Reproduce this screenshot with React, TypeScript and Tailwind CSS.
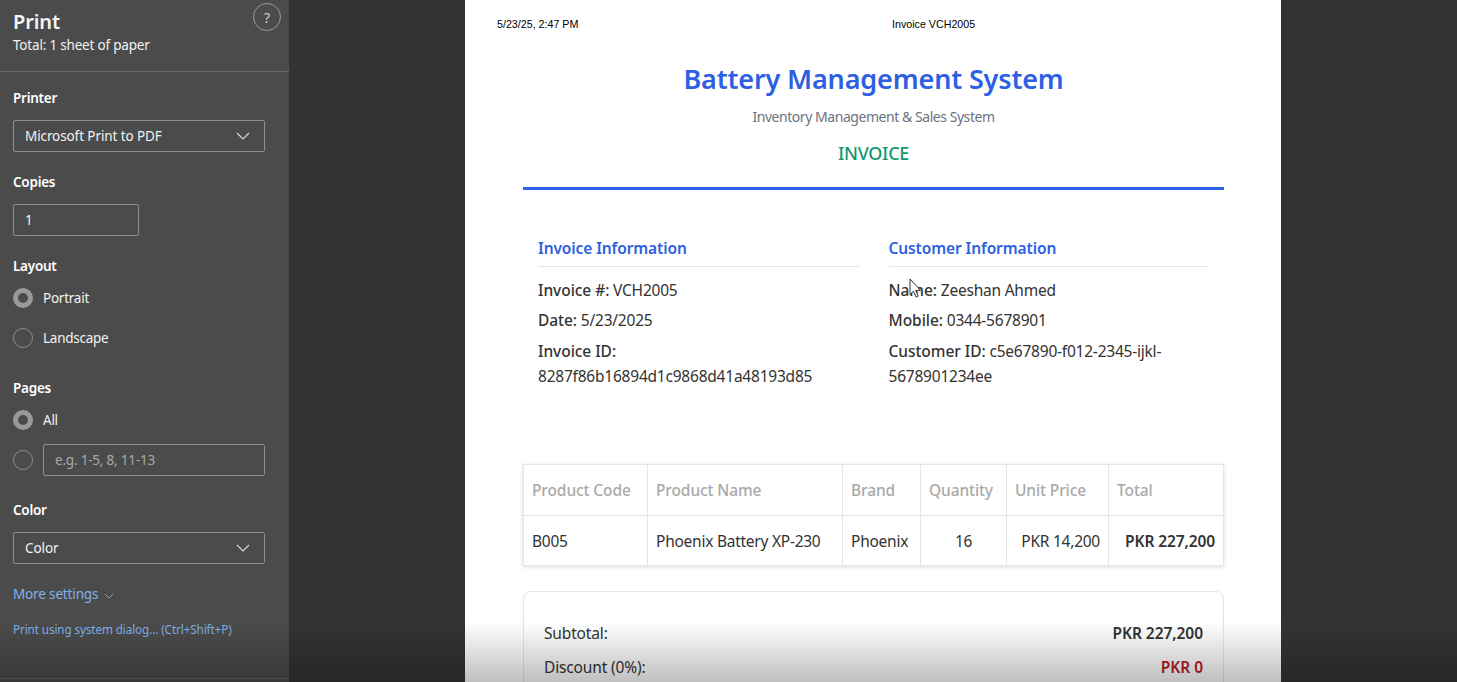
const font = "font-['Noto_Sans','Open_Sans',sans-serif]";

function Chevron() {
  return (
    <svg width="14" height="8" viewBox="0 0 14 8" fill="none" stroke="#d8d8d8" strokeWidth="1.2">
      <path d="M1 1l6 6 6-6" />
    </svg>
  );
}

function SectionLabel({ children }: { children: React.ReactNode }) {
  return <div className="h-5 text-[13.5px] leading-5 font-semibold tracking-[-0.25px] text-white">{children}</div>;
}

function Select({ value }: { value: string }) {
  return (
    <div className="mt-3 flex h-8 w-[252px] items-center justify-between rounded-[2px] border border-[#8d8d8d] pl-[11px] pr-[14px] text-[13.5px] tracking-[-0.1px] text-[#f2f2f2]">
      <span>{value}</span>
      <Chevron />
    </div>
  );
}

function Radio({ checked }: { checked?: boolean }) {
  return checked ? (
    <span className="block h-5 w-5 shrink-0 rounded-full border-[5px] border-[#9a9a9a]" />
  ) : (
    <span className="block h-5 w-5 shrink-0 rounded-full border border-[#8d8d8d]" />
  );
}

function RadioRow({ label, checked }: { label: string; checked?: boolean }) {
  return (
    <div className="flex h-5 items-center gap-2.5 text-[13.5px] tracking-[-0.25px] text-[#f2f2f2]">
      <Radio checked={checked} />
      <span>{label}</span>
    </div>
  );
}

function Sidebar() {
  return (
    <aside className="flex h-full w-[289px] shrink-0 flex-col bg-[#4b4b4b]">
      <div className="relative h-[72px] border-b border-[#6a6a6a] pl-[13px] pt-[9px]">
        <div className="h-[26px] text-[20px] leading-[26px] font-semibold tracking-[-0.1px] text-[#f5f5f5]">Print</div>
        <div className="text-[13.5px] leading-5 tracking-[-0.2px] text-[#f2f2f2]">Total: 1 sheet of paper</div>
        <div className="absolute right-[8px] top-[3px] flex h-[28px] w-[28px] items-center justify-center rounded-full border border-[#9a9a9a] text-[14px] text-[#d0d0d0]">?</div>
      </div>
      <div className="pl-[13px]">
        <div className="pt-4">
          <SectionLabel>Printer</SectionLabel>
          <Select value="Microsoft Print to PDF" />
        </div>
        <div className="pt-[20px]">
          <SectionLabel>Copies</SectionLabel>
          <div className="mt-3 flex h-8 w-[126px] items-center rounded-[2px] border border-[#8d8d8d] pl-[11px] pt-[1px] text-[13.5px] text-[#f2f2f2]">1</div>
        </div>
        <div className="pt-5">
          <SectionLabel>Layout</SectionLabel>
          <div className="mt-[12px] flex flex-col gap-5">
            <RadioRow label="Portrait" checked />
            <RadioRow label="Landscape" />
          </div>
        </div>
        <div className="pt-[30px]">
          <SectionLabel>Pages</SectionLabel>
          <div className="mt-[12px]">
            <RadioRow label="All" checked />
          </div>
          <div className="mt-[14px] flex items-center gap-2.5">
            <Radio />
            <div className="flex h-8 w-[222px] items-center rounded-[2px] border border-[#8d8d8d] pl-[11px] text-[13.5px] tracking-[-0.2px] text-[#a8a8a8]">e.g. 1-5, 8, 11-13</div>
          </div>
        </div>
        <div className="pt-[24px]">
          <SectionLabel>Color</SectionLabel>
          <Select value="Color" />
        </div>
        <div className="mt-[20px] flex h-5 items-center gap-[6px] text-[13.5px] tracking-[-0.15px] text-[#7fb2e8]">
          <span>More settings</span>
          <svg width="10" height="6" viewBox="0 0 10 6" fill="none" stroke="#8a9aa8" strokeWidth="1" className="mt-1">
            <path d="M1 1l4 4 4-4" />
          </svg>
        </div>
        <div className="mt-[17px] text-[11.7px] leading-4 tracking-[-0.1px] text-[#7fb2e8]">Print using system dialog... (Ctrl+Shift+P)</div>
      </div>
      <div className="mt-auto h-[4px] border-t border-[#6a6a6a]" />
    </aside>
  );
}

function InfoLine({ label, value }: { label: string; value?: string }) {
  return (
    <div className="mb-[5px] text-[15.5px] leading-[25.5px] tracking-[-0.22px] text-[#333]">
      <span className="font-medium tracking-[-0.05px]">{label}</span> {value}
    </div>
  );
}

function InfoBlock({ title, children }: { title: string; children: React.ReactNode }) {
  return (
    <div className="px-[15px]">
      <div className="h-[32px] border-b border-[#e5e5e5] text-[15.5px] leading-[26px] font-semibold tracking-[-0.1px] text-[#2d5fe3]">{title}</div>
      <div className="pt-[10.7px]">{children}</div>
    </div>
  );
}

const headers = [
  ["Product Code", "w-[124px]"],
  ["Product Name", "w-[195px]"],
  ["Brand", "w-[78px]"],
  ["Quantity", "w-[86px]"],
  ["Unit Price", "w-[102px]"],
  ["Total", ""],
];

function Paper() {
  return (
    <div className="relative h-full w-[816px] shrink-0 overflow-hidden bg-white">
      <div className="relative h-[48px] font-['Liberation_Sans',sans-serif] text-[10.7px] text-black">
        <span className="absolute left-[32px] top-[17px] leading-[14px]">5/23/25, 2:47 PM</span>
        <span className="absolute left-[427px] top-[17px] leading-[14px]">Invoice VCH2005</span>
      </div>
      <div className="ml-[58px] w-[701px]">
        <div className="h-[142px] border-b-[3px] border-[#2b62e3] text-center">
          <div className="pt-[13px] text-[27px] leading-[36px] font-semibold tracking-[-0.15px] text-[#2d5fe3]">Battery Management System</div>
          <div className="mt-[10px] text-[14px] leading-5 tracking-[-0.45px] text-[#6b7280]">Inventory Management &amp; Sales System</div>
          <div className="mt-[14px] text-[18px] leading-[24px] font-medium tracking-[-0.3px] text-[#12986f]">INVOICE</div>
        </div>
        <div className="grid grid-cols-2 pt-[45px]">
          <InfoBlock title="Invoice Information">
            <InfoLine label="Invoice #:" value="VCH2005" />
            <InfoLine label="Date:" value="5/23/2025" />
            <InfoLine label="Invoice ID:" value="8287f86b16894d1c9868d41a48193d85" />
          </InfoBlock>
          <InfoBlock title="Customer Information">
            <InfoLine label="Name:" value="Zeeshan Ahmed" />
            <InfoLine label="Mobile:" value="0344-5678901" />
            <InfoLine label="Customer ID:" value="c5e67890-f012-2345-ijkl-5678901234ee" />
          </InfoBlock>
        </div>
        <table className="mt-[69px] w-[701px] table-fixed border-collapse text-[15.5px] tracking-[-0.25px] shadow-[0_1px_4px_rgba(0,0,0,0.15)]">
          <thead>
            <tr className="h-[51px]">
              {headers.map(([h, w]) => (
                <th key={h} className={`border border-[#e5e5e5] pl-2 pt-[2px] text-left font-medium tracking-[-0.1px] text-[#a9a9a9] ${w}`}>{h}</th>
              ))}
            </tr>
          </thead>
          <tbody>
            <tr className="h-[50px] text-[#333]">
              <td className="border border-[#e5e5e5] pl-2 pt-[2px]">B005</td>
              <td className="border border-[#e5e5e5] pl-2 pt-[2px]">Phoenix Battery XP-230</td>
              <td className="border border-[#e5e5e5] pl-2 pt-[2px]">Phoenix</td>
              <td className="border border-[#e5e5e5] pt-[2px] text-center">16</td>
              <td className="border border-[#e5e5e5] pr-2 pt-[2px] text-right">PKR 14,200</td>
              <td className="border border-[#e5e5e5] pr-2 pt-[2px] text-right font-semibold tracking-[-0.1px]">PKR 227,200</td>
            </tr>
          </tbody>
        </table>
        <div className="mt-[25px] rounded-lg border border-[#e5e5e5] px-[20px] pb-10 pt-[29px] text-[15.5px] tracking-[-0.15px] text-[#333]">
          <div className="flex h-[26px] items-center justify-between">
            <span>Subtotal:</span>
            <span className="font-semibold tracking-[-0.05px]">PKR 227,200</span>
          </div>
          <div className="mt-2 flex h-[26px] items-center justify-between">
            <span>Discount (0%):</span>
            <span className="font-semibold tracking-[-0.05px] text-[#b91c1c]">PKR 0</span>
          </div>
        </div>
      </div>
    </div>
  );
}

export default function App() {
  return (
    <div className={`relative flex h-[682px] w-[1457px] overflow-hidden bg-[#333] ${font}`}>
      <Sidebar />
      <main className="flex h-full flex-1 justify-center">
        <Paper />
      </main>
      {/* mouse pointer */}
      <svg width="13" height="21" viewBox="0 0 13 21" className="absolute left-[909px] top-[278px]">
        <path d="M1 1v15.5l3.5-3.2 2.6 5.8 2.2-1-2.6-5.7H11.5z" fill="#fff" stroke="#333" strokeWidth="1" />
      </svg>
      {/* video-player fade along the bottom */}
      <div className="pointer-events-none absolute inset-x-0 bottom-0 h-[60px] bg-gradient-to-b from-transparent to-black/25" />
    </div>
  );
}
